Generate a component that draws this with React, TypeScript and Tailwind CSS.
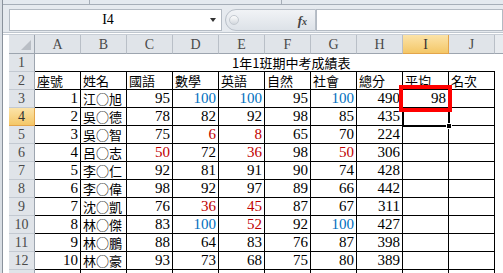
import React from "react";

const cols = ["A", "B", "C", "D", "E", "F", "G", "H", "I", "J"];
const heads = ["座號", "姓名", "國語", "數學", "英語", "自然", "社會", "總分", "平均", "名次"];

const students: [number, string, number[], number, number | null][] = [
  [1, "江○旭", [95, 100, 100, 95, 100], 490, 98],
  [2, "吳○德", [78, 82, 92, 98, 85], 435, null],
  [3, "吳○智", [75, 6, 8, 65, 70], 224, null],
  [4, "呂○志", [50, 72, 36, 98, 50], 306, null],
  [5, "李○仁", [92, 81, 91, 90, 74], 428, null],
  [6, "李○偉", [98, 92, 97, 89, 66], 442, null],
  [7, "沈○凱", [76, 36, 45, 87, 67], 311, null],
  [8, "林○傑", [83, 100, 52, 92, 100], 427, null],
  [9, "林○鵬", [88, 64, 83, 76, 87], 398, null],
  [10, "林○豪", [93, 73, 68, 75, 80], 389, null],
];

const font = "font-['Liberation_Serif','Noto_Sans_CJK_TC',serif]";
const cjk = "font-['Noto_Sans_CJK_TC',sans-serif]";

function scoreColor(n: number) {
  if (n >= 100) return "text-[#0070c0]";
  if (n < 60) return "text-[#c00000]";
  return "text-black";
}

function RowHead({ n, active }: { n: number; active?: boolean }) {
  return (
    <div
      className={`flex h-full w-[26px] shrink-0 items-center justify-center border-r border-b text-[14px] ${
        active
          ? "border-r-[#e3a54b] border-b-[#e3a54b] bg-gradient-to-b from-[#fbe3a8] to-[#f4c766] text-[#333]"
          : "border-r-[#9da5af] border-b-[#c3c9d1] bg-[#e0e4e9] text-[#4a4a4a]"
      }`}
    >
      {n}
    </div>
  );
}

function Num({ v, color = "text-black" }: { v: number | string; color?: string }) {
  return (
    <div className={`flex h-full w-[46px] shrink-0 items-end justify-end border-r border-b border-black pr-[2px] pb-[1px] text-[15px] leading-none ${color}`}>
      {v}
    </div>
  );
}

function Txt({ v }: { v: string }) {
  return (
    <div className={`flex h-full w-[46px] shrink-0 items-center border-r border-b border-black pl-[2px] text-[13px] leading-none ${cjk}`}>
      {v}
    </div>
  );
}

export default function App() {
  return (
    <div className={`relative flex h-[273px] w-[503px] overflow-hidden bg-white ${font}`}>
      <div className="h-full w-[3px] shrink-0 border-r border-[#8a929c] bg-[#d9dee4]" />
      <div className="flex w-[500px] flex-col">
        {/* ribbon edge */}
        <div className="flex h-[5px] shrink-0 border-b border-[#a6aeb8] bg-[#e4e9ef]">
          <div className="w-[87px] border-r border-[#a6aeb8]" />
          <div className="w-[192px] border-r border-[#a6aeb8]" />
        </div>
        {/* formula bar */}
        <div className="flex h-[27px] shrink-0 items-start bg-[#e6eaef] pt-[4px] pl-[6px]">
          <div className="relative flex h-[22px] w-[213px] items-center border border-[#b3bac3] bg-white">
            <span className="w-[196px] text-center text-[14px] leading-none">I4</span>
            <span className="absolute right-[5px] top-[8px] h-0 w-0 border-x-[3.5px] border-t-[4px] border-x-transparent border-t-[#333]" />
          </div>
          <div className="ml-[3px] flex h-[22px] w-[91px] items-center rounded-l-full border border-[#b8bfc8] bg-gradient-to-b from-[#f1f3f6] to-[#dde2e8]">
            <span className="ml-[3px] h-[10px] w-[10px] rounded-full border border-[#c3c9d0] bg-gradient-to-b from-[#fdfdfd] to-[#d3d8de]" />
            <span className="ml-auto mr-[8px] text-[13px] font-bold italic leading-none text-[#444]">
              f<span className="text-[10px]">x</span>
            </span>
          </div>
          <div className="h-[22px] flex-1 border border-[#b3bac3] bg-white" />
        </div>
        <div className="h-[3px] shrink-0 border-t border-b border-t-[#bfc6ce] border-b-[#c8ced6] bg-white" />
        {/* column header */}
        <div className="flex h-[19px] shrink-0">
          <div className="w-[6px] shrink-0" />
          <div className="relative h-full w-[26px] shrink-0 border-r border-b border-[#9da5af] bg-[#e0e4e9]">
            <span className="absolute bottom-[3px] right-[3px] h-0 w-0 border-l-[10px] border-b-[10px] border-l-transparent border-b-[#b9bec5]" />
          </div>
          {cols.map((c) => (
            <div
              key={c}
              className={`flex h-full w-[46px] shrink-0 items-center justify-center border-r border-b text-[14px] ${
                c === "I"
                  ? "border-r-[#e3a54b] border-b-[#e3a54b] bg-gradient-to-b from-[#fbe3a8] to-[#f4c766] text-[#333]"
                  : "border-r-[#b9bfc7] border-b-[#9da5af] bg-[#e0e4e9] text-[#4a4a4a]"
              }`}
            >
              {c}
            </div>
          ))}
          <div className="h-full flex-1 border-b border-[#9da5af] bg-[#e8ebef]" />
        </div>
        {/* row 1 */}
        <div className="flex h-[18px] shrink-0">
          <div className="w-[6px] shrink-0" />
          <RowHead n={1} />
          <div className={`flex h-full w-[460px] shrink-0 items-center border-b border-black pl-[197px] text-[13px] leading-none ${cjk}`}>
            1年1班期中考成績表
          </div>
        </div>
        {/* row 2 */}
        <div className="flex h-[18px] shrink-0">
          <div className="w-[6px] shrink-0" />
          <RowHead n={2} />
          {heads.map((h) => (
            <Txt key={h} v={h} />
          ))}
        </div>
        {students.map(([no, name, scores, total, avg], i) => (
          <div key={no} className="flex h-[18px] shrink-0">
            <div className="w-[6px] shrink-0" />
            <RowHead n={i + 3} active={i + 3 === 4} />
            <Num v={no} />
            <Txt v={name} />
            {scores.map((s, k) => (
              <Num key={k} v={s} color={scoreColor(s)} />
            ))}
            <Num v={total} />
            <Num v={avg ?? ""} />
            <Num v="" />
          </div>
        ))}
        <div className="flex h-[18px] shrink-0">
          <div className="w-[6px] shrink-0" />
          <RowHead n={13} />
          {cols.map((c) => (
            <div key={c} className="h-full w-[46px] shrink-0 border-r border-black" />
          ))}
        </div>
      </div>
      {/* active cell I4 */}
      <div className="absolute left-[402px] top-[107px] h-[20px] w-[48px] border-2 border-black">
        <span className="absolute -bottom-[4px] -right-[4px] h-[6px] w-[6px] border border-white bg-black" />
      </div>
      {/* highlight box */}
      <div className="absolute left-[399px] top-[85px] h-[27px] w-[53px] border-[4px] border-[#ff0000]" />
    </div>
  );
}
